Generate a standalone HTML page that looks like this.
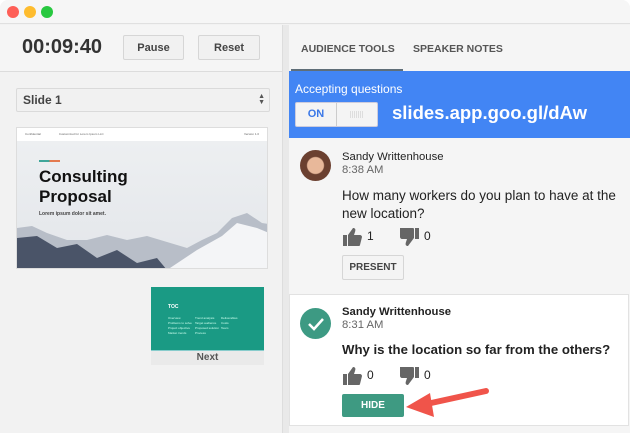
<!DOCTYPE html>
<html><head><style>
*{box-sizing:border-box;margin:0;padding:0}
body{width:630px;height:433px;background:#fff;font-family:"Liberation Sans",Arial,sans-serif;position:relative;overflow:hidden}
.abs{position:absolute}
.btn{position:absolute;background:#f1f1f1;border:1px solid #d6d6d6;border-radius:2px;font-size:11px;font-weight:bold;color:#444;text-align:center}
</style></head><body>
<div class="abs" style="left:0;top:0;width:630px;height:433px;background:#f2f2f2;border-radius:8px 8px 0 0;"></div>
<div class="abs" style="left:0;top:0;width:630px;height:24px;background:#f6f6f6;border-bottom:1px solid #e0e0e0;border-radius:8px 8px 0 0"></div>
<div class="abs" style="left:7px;top:6px;width:12px;height:12px;border-radius:50%;background:#fe5f57"></div>
<div class="abs" style="left:24px;top:6px;width:12px;height:12px;border-radius:50%;background:#febc2e"></div>
<div class="abs" style="left:41px;top:6px;width:12px;height:12px;border-radius:50%;background:#28c840"></div>
<div class="abs" style="left:0;top:25px;width:282px;height:408px;background:#f2f2f2"></div>
<div class="abs" style="left:0;top:25px;width:282px;height:47px;background:#f5f5f5;border-bottom:1px solid #dcdcdc"></div>
<div class="abs" style="left:22px;top:36px;font-size:20px;font-weight:bold;color:#333">00:09:40</div>
<div class="btn" style="left:123px;top:35px;width:61px;height:25px;line-height:24px">Pause</div>
<div class="btn" style="left:198px;top:35px;width:62px;height:25px;line-height:24px">Reset</div>
<div class="abs" style="left:16px;top:88px;width:254px;height:24px;background:#f1f1f1;border:1px solid #dadada;border-radius:2px;font-size:12px;font-weight:bold;color:#444;line-height:22px;padding-left:6px">Slide 1
<span style="position:absolute;right:4px;top:5px;font-size:7px;line-height:6px;color:#555">▲<br>▼</span></div>
<div class="abs" style="left:16px;top:127px;width:252px;height:142px;border:1px solid #ddd;background:linear-gradient(#eef0f2,#e3e6ea);overflow:hidden">
<div style="height:13px;background:#fff;font-size:3px;color:#666;padding:4px 8px">Confidential<span style="margin-left:18px">Customized for Lorem Ipsum LLC</span><span style="float:right">Version 1.0</span></div>
<div style="position:absolute;left:22px;top:32px;width:21px;height:2px;background:linear-gradient(90deg,#3fa69a 50%,#e47a4f 50%)"></div>
<div style="position:absolute;left:22px;top:39px;font-size:17px;font-weight:bold;color:#111;line-height:20px">Consulting<br>Proposal</div>
<div style="position:absolute;left:22px;top:83px;font-size:5px;font-weight:bold;color:#444">Lorem ipsum dolor sit amet.</div>
<svg style="position:absolute;left:0;top:50px" width="252" height="92"><polygon points="0,50 15,48 30,55 50,62 70,62 90,57 110,62 130,58 150,64 170,70 185,62 200,55 215,40 230,35 245,45 252,46 252,92 0,92" fill="#b8bec8"/><polygon points="0,60 20,58 40,70 60,66 80,80 100,72 120,85 140,80 150,92 0,92" fill="#4a5468"/><polygon points="150,92 180,72 205,58 220,45 240,50 252,55 252,92" fill="#f4f5f7"/></svg>
</div>
<div class="abs" style="left:151px;top:287px;width:113px;height:78px;background:#eaeaea">
<div style="height:64px;background:#1a9a84;border-bottom:1px solid #8cc;position:relative;font-size:3px;color:#cfe">
<div style="position:absolute;left:17px;top:17px;font-size:5px;font-weight:bold;color:#fff">TOC</div>
<div style="position:absolute;left:17px;top:29px;line-height:5px">Overview<br>Problems to solve<br>Project objective<br>Market trends</div>
<div style="position:absolute;left:44px;top:29px;line-height:5px">Trend analysis<br>Target audience<br>Proposed solution<br>Process</div>
<div style="position:absolute;left:70px;top:29px;line-height:5px">Deliverables<br>Costs<br>Team</div></div>
<div style="text-align:center;font-size:10px;font-weight:bold;color:#555;line-height:13px">Next</div></div>
<div class="abs" style="left:282px;top:25px;width:7px;height:408px;background:#e9e9e9;border-left:1px solid #ddd"></div>
<div class="abs" style="left:289px;top:25px;width:341px;height:408px;background:#f5f5f5"></div>
<div class="abs" style="left:301px;top:43px;font-size:10.5px;font-weight:bold;color:#555">AUDIENCE TOOLS</div>
<div class="abs" style="left:413px;top:43px;font-size:10.5px;font-weight:bold;color:#555">SPEAKER NOTES</div>
<div class="abs" style="left:291px;top:69px;width:112px;height:2px;background:#5f6e78"></div>
<div class="abs" style="left:289px;top:71px;width:341px;height:67px;background:#4285f4"></div>
<div class="abs" style="left:295px;top:82px;font-size:12px;color:#fff">Accepting questions</div>
<div class="abs" style="left:295px;top:102px;width:83px;height:25px;background:#f4f4f4;border:1px solid #ccd;border-radius:2px">
<div style="position:absolute;left:0;top:0;width:41px;height:23px;border-right:1px solid #ccc;font-size:11px;font-weight:bold;color:#3b78e7;text-align:center;line-height:23px">ON</div>
<div style="position:absolute;left:54px;top:8px;width:14px;height:7px;background:repeating-linear-gradient(90deg,#ddd 0 1px,transparent 1px 2px)"></div></div>
<div class="abs" style="left:392px;top:102px;font-size:18.5px;font-weight:bold;color:#fff">slides.app.goo.gl/dAw</div>
<div class="abs" style="left:300px;top:150px;width:31px;height:31px;border-radius:50%;background:radial-gradient(circle at 50% 50%,#e8b89a 0 8px,#6b4030 9px)"></div>
<div class="abs" style="left:342px;top:151px;font-size:11.3px;color:#222">Sandy Writtenhouse</div>
<div class="abs" style="left:342px;top:164px;font-size:11.3px;color:#666">8:38 AM</div>
<div class="abs" style="left:342px;top:187px;font-size:13.5px;color:#222;line-height:18px">How many workers do you plan to have at the<br>new location?</div>
<svg class="abs" style="left:343px;top:227px" width="80" height="20"><path d="M0 8h4v11H0zM5 8l5-7c2 0 3 1 2 4l-1 3h6c1 0 2 1 2 2l-2 8c0 1-1 1-2 1H5z" fill="#666"/><g transform="translate(57,0)"><path d="M0 1h13c1 0 1 1 1 2v8l-6 8c-2 0-3-1-2-4l1-3H2c-1 0-2-1-2-2zM15 1h4v11h-4z" fill="#666"/></g></svg>
<div class="abs" style="left:367px;top:229px;font-size:12px;color:#222">1</div>
<div class="abs" style="left:424px;top:229px;font-size:12px;color:#222">0</div>
<div class="btn" style="left:342px;top:255px;width:62px;height:25px;line-height:24px;font-size:10px;background:#f4f4f4">PRESENT</div>
<div class="abs" style="left:289px;top:294px;width:340px;height:132px;background:#fff;border:1px solid #e2e2e2"></div>
<div class="abs" style="left:300px;top:308px;width:31px;height:31px;border-radius:50%;background:#3d9a83"></div>
<svg class="abs" style="left:300px;top:308px" width="31" height="31"><path d="M9 16l5 5 9-10" stroke="#fff" stroke-width="2.5" fill="none"/></svg>
<div class="abs" style="left:342px;top:306px;font-size:11.3px;font-weight:bold;color:#222">Sandy Writtenhouse</div>
<div class="abs" style="left:342px;top:319px;font-size:11.3px;color:#666">8:31 AM</div>
<div class="abs" style="left:342px;top:342px;font-size:13.2px;font-weight:bold;color:#222">Why is the location so far from the others?</div>
<svg class="abs" style="left:343px;top:366px" width="80" height="20"><path d="M0 8h4v11H0zM5 8l5-7c2 0 3 1 2 4l-1 3h6c1 0 2 1 2 2l-2 8c0 1-1 1-2 1H5z" fill="#666"/><g transform="translate(57,0)"><path d="M0 1h13c1 0 1 1 1 2v8l-6 8c-2 0-3-1-2-4l1-3H2c-1 0-2-1-2-2zM15 1h4v11h-4z" fill="#666"/></g></svg>
<div class="abs" style="left:367px;top:368px;font-size:12px;color:#222">0</div>
<div class="abs" style="left:424px;top:368px;font-size:12px;color:#222">0</div>
<div class="abs" style="left:342px;top:394px;width:62px;height:23px;background:#3e9a82;border-radius:2px;color:#fff;font-size:10px;font-weight:bold;text-align:center;line-height:23px">HIDE</div>
<svg class="abs" style="left:400px;top:385px" width="90" height="40"><path d="M86 6L22 20" stroke="#f0544a" stroke-width="6" stroke-linecap="round"/><polygon points="6,22 30,8 34,32" fill="#f0544a"/></svg>
</body></html>
